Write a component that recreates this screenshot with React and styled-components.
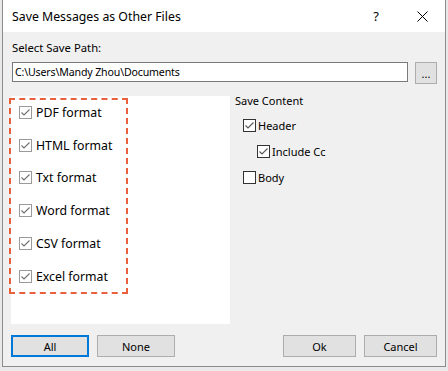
import React, { useState } from "react";
import styled, { createGlobalStyle } from "styled-components";

const GlobalStyle = createGlobalStyle`
  body {
    margin: 0;
    background: #e9e9e9;
    font-family: "Noto Sans", "Open Sans", sans-serif;
    font-size: 11px;
    color: #000;
  }
`;

const Window = styled.div`
  margin-left: 2px;
  width: 444px;
  height: 367px;
  box-sizing: border-box;
  border: 1px solid #8c8c8c;
  border-top: none;
  background: #f0f0f0;
  display: flex;
  flex-direction: column;
`;

const TitleBar = styled.div`
  height: 32px;
  background: #fff;
  display: flex;
  align-items: center;
  padding-left: 9px;
`;

const Title = styled.div`
  flex: 1;
  font-size: 12.3px;
`;

const TitleButton = styled.div`
  width: 46px;
  height: 32px;
  display: flex;
  align-items: center;
  justify-content: center;
  font-size: 13px;
`;

const Body = styled.div`
  flex: 1;
  display: flex;
  flex-direction: column;
  padding: 8px 8px 9px 8px;
`;

const Label = styled.div`
  height: 16px;
  line-height: 16px;
  padding-left: 1px;
  font-size: 11.3px;
`;

const PathRow = styled.div`
  display: flex;
  gap: 7px;
  margin-top: 6px;
  padding-left: 1px;
`;

const PathInput = styled.div`
  width: 396px;
  height: 20px;
  box-sizing: border-box;
  border: 1px solid #7a7a7a;
  background: #fff;
  padding-left: 2px;
  line-height: 18px;
  font-size: 10.6px;
  letter-spacing: -0.15px;
`;

const Button = styled.div`
  width: ${(p) => p.$w || 78}px;
  height: 22px;
  box-sizing: border-box;
  border: ${(p) => (p.$focus ? "2px solid #0078d7" : "1px solid #adadad")};
  background: #e1e1e1;
  display: flex;
  align-items: center;
  justify-content: center;
`;

const Main = styled.div`
  display: flex;
  margin-top: 12px;
  height: 228px;
`;

const ListPanel = styled.div`
  position: relative;
  width: 219px;
  background: #fff;
  font-size: 12.3px;
`;

const Dashed = styled.div`
  position: absolute;
  left: -2px;
  top: 2px;
  width: 119px;
  height: 196px;
  box-sizing: border-box;
  border: 2px dashed #e8603c;
  pointer-events: none;
`;

const Row = styled.div`
  height: 32.8px;
  display: flex;
  align-items: center;
  gap: 4px;
  padding-left: 8px;
`;

const Box = styled.div`
  width: 13px;
  height: 13px;
  box-sizing: border-box;
  border: 1px solid ${(p) => (p.$dim ? "#9a9a9a" : "#333")};
  background: #fff;
  display: flex;
  align-items: center;
  justify-content: center;
`;

const Side = styled.div`
  flex: 1;
  padding-left: 5px;
  margin-top: -2px;
`;

const SideTitle = styled.div`
  height: 14px;
  line-height: 14px;
  margin-bottom: 4px;
`;

const Option = styled.div`
  display: flex;
  align-items: center;
  gap: 2px;
  height: 26px;
  padding-left: ${(p) => p.$indent}px;
`;

const Footer = styled.div`
  margin-top: auto;
  display: flex;
  gap: 8px;
`;

const Spacer = styled.div`
  flex: 1;
`;

const Check = ({ on, dim }) => (
  <Box $dim={dim}>
    {on && (
      <svg width="11" height="11" viewBox="0 0 11 11">
        <polyline
          points="1.5,5.5 4,8 9.5,2.5"
          fill="none"
          stroke={dim ? "#6f6f6f" : "#555"}
          strokeWidth="1.1"
        />
      </svg>
    )}
  </Box>
);

const formats = ["PDF format", "HTML format", "Txt format", "Word format", "CSV format", "Excel format"];

const App = () => {
  const [content, setContent] = useState({ header: true, cc: true, body: false });
  const toggle = (k) => setContent({ ...content, [k]: !content[k] });

  return (
    <>
      <GlobalStyle />
      <Window>
        <TitleBar>
          <Title>Save Messages as Other Files</Title>
          <TitleButton>?</TitleButton>
          <TitleButton>
            <svg width="11" height="11" viewBox="0 0 11 11">
              <path d="M0.5 0.5 L10.5 10.5 M10.5 0.5 L0.5 10.5" stroke="#000" strokeWidth="1" />
            </svg>
          </TitleButton>
        </TitleBar>
        <Body>
          <Label>Select Save Path:</Label>
          <PathRow>
            <PathInput>C:\Users\Mandy Zhou\Documents</PathInput>
            <Button $w={22}>...</Button>
          </PathRow>
          <Main>
            <ListPanel>
              <Dashed />
              {formats.map((f) => (
                <Row key={f}>
                  <Check on dim />
                  <span>{f}</span>
                </Row>
              ))}
            </ListPanel>
            <Side>
              <SideTitle>Save Content</SideTitle>
              <Option $indent={8} onClick={() => toggle("header")}>
                <Check on={content.header} />
                <span>Header</span>
              </Option>
              <Option $indent={22} onClick={() => toggle("cc")}>
                <Check on={content.cc} />
                <span>Include Cc</span>
              </Option>
              <Option $indent={8} onClick={() => toggle("body")}>
                <Check on={content.body} />
                <span>Body</span>
              </Option>
            </Side>
          </Main>
          <Footer>
            <Button $focus>All</Button>
            <Button>None</Button>
            <Spacer />
            <Button $w={73}>Ok</Button>
            <Button $w={73}>Cancel</Button>
          </Footer>
        </Body>
      </Window>
    </>
  );
};

export default App;
